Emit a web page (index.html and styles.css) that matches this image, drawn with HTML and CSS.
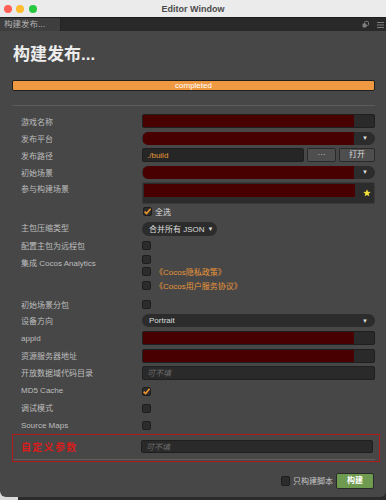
FILE: index.html
```html
<!DOCTYPE html>
<html lang="zh">
<head>
    <meta charset="UTF-8">
    <meta name="viewport" content="width=device-width, initial-scale=1.0">
    <title>Editor Window</title>
    <link rel="stylesheet" href="styles.css">
</head>
<body>
    <div class="window">
        <div class="titlebar">
            <div class="lights">
                <span class="light red"></span>
                <span class="light yellow"></span>
                <span class="light green"></span>
            </div>
            <div class="title">Editor Window</div>
            <div></div>
        </div>

        <div class="tabbar">
            <div class="tab">构建发布...</div>
            <div class="tab-rest">
                <svg width="7" height="7" viewBox="0 0 7 7">
                    <rect x="2.5" y="0.5" width="4" height="4" rx="1" fill="none" stroke="#7d7d7d"/>
                    <rect x="0.5" y="2.5" width="4" height="4" rx="1" fill="#7d7d7d"/>
                </svg>
                <svg width="7" height="6" viewBox="0 0 7 6">
                    <path d="M0 0.5H7M0 3H7M0 5.5H7" stroke="#7d7d7d" stroke-width="1"/>
                </svg>
            </div>
        </div>

        <div class="panel">
            <h1>构建发布...</h1>
            <div class="progress">completed</div>
            <div class="divider"></div>

            <div class="form">
                <div class="row">
                    <span class="label">游戏名称</span>
                    <div class="input"><span class="redact"></span></div>
                </div>
                <div class="row">
                    <span class="label">发布平台</span>
                    <div class="select"><span class="redact"></span><span class="arrow">▼</span></div>
                </div>
                <div class="row">
                    <span class="label">发布路径</span>
                    <div class="path">
                        <div class="input path-input">./build</div>
                        <div class="btn dots">···</div>
                        <div class="btn open">打开</div>
                    </div>
                </div>
                <div class="row">
                    <span class="label">初始场景</span>
                    <div class="select"><span class="redact"></span><span class="arrow">▼</span></div>
                </div>
                <div class="row scenes-row">
                    <span class="label top">参与构建场景</span>
                    <div class="scenes">
                        <span class="redact"></span>
                        <svg class="star" width="8" height="8" viewBox="0 0 10 10">
                            <path d="M5 0.4L6.3 3.4L9.6 3.7L7.1 5.9L7.9 9.2L5 7.5L2.1 9.2L2.9 5.9L0.4 3.7L3.7 3.4Z" fill="#f3df3c"/>
                        </svg>
                    </div>
                </div>
                <div class="row selall-row">
                    <span></span>
                    <div class="selall">
                        <span class="check on">
                            <svg width="9" height="9" viewBox="0 0 9 9"><path d="M1.6 4.6L3.6 6.6L7.6 1.8" fill="none" stroke="#f0962e" stroke-width="1.6"/></svg>
                        </span>
                        <span>全选</span>
                    </div>
                </div>
                <div class="row pill-row">
                    <span class="label">主包压缩类型</span>
                    <div><span class="pill">合并所有 JSON <span class="arrow">▼</span></span></div>
                </div>
                <div class="row short">
                    <span class="label">配置主包为远程包</span>
                    <div><span class="check"></span></div>
                </div>
                <div class="row short">
                    <span class="label low">集成 Cocos Analytics</span>
                    <div><span class="check"></span></div>
                </div>
                <div class="row short">
                    <span></span>
                    <div class="link-line"><span class="check"></span><span class="link">《Cocos隐私政策》</span></div>
                </div>
                <div class="row short">
                    <span></span>
                    <div class="link-line"><span class="check"></span><span class="link">《Cocos用户服务协议》</span></div>
                </div>

                <div class="group">
                    <div class="row tall">
                        <span class="label">初始场景分包</span>
                        <div><span class="check"></span></div>
                    </div>
                    <div class="row tall">
                        <span class="label">设备方向</span>
                        <div class="select"><span class="value">Portrait</span><span class="arrow">▼</span></div>
                    </div>
                    <div class="row tall">
                        <span class="label">appid</span>
                        <div class="input"><span class="redact"></span></div>
                    </div>
                    <div class="row tall">
                        <span class="label">资源服务器地址</span>
                        <div class="input"><span class="redact"></span></div>
                    </div>
                    <div class="row tall">
                        <span class="label">开放数据域代码目录</span>
                        <div class="input"><span class="placeholder">可不填</span></div>
                    </div>
                    <div class="row tall">
                        <span class="label">MD5 Cache</span>
                        <div>
                            <span class="check on">
                                <svg width="9" height="9" viewBox="0 0 9 9"><path d="M1.6 4.6L3.6 6.6L7.6 1.8" fill="none" stroke="#f0962e" stroke-width="1.6"/></svg>
                            </span>
                        </div>
                    </div>
                    <div class="row tall">
                        <span class="label">调试模式</span>
                        <div><span class="check"></span></div>
                    </div>
                    <div class="row tall">
                        <span class="label">Source Maps</span>
                        <div><span class="check"></span></div>
                    </div>
                </div>
            </div>

            <!-- 自定义参数 -->
            <div class="custom">
                <div class="row custom-row">
                    <span class="custom-label">自定义参数</span>
                    <div class="input"><span class="placeholder">可不填</span></div>
                </div>
                <div class="custom-divider"></div>
            </div>

            <div class="footer">
                <span class="check big"></span>
                <span class="footer-text">只构建脚本</span>
                <div class="build">构建</div>
            </div>
        </div>
    </div>
    <div class="dock"></div>
</body>
</html>
```

FILE: styles.css
```css
* {
    box-sizing: border-box;
}

body {
    margin: 0;
    width: 386px;
    height: 500px;
    overflow: hidden;
    background: linear-gradient(to right, #dadada 0, #dadada 18px, #2b2b2b 18px);
    font-family: "Liberation Sans", "Noto Sans CJK SC", sans-serif;
}

.window {
    height: 497px;
    display: flex;
    flex-direction: column;
}

/* 标题栏 */
.titlebar {
    height: 17px;
    background-color: #ebebeb;
    display: grid;
    grid-template-columns: 1fr auto 1fr;
    align-items: center;
}

.lights {
    display: flex;
    gap: 4.5px;
    padding-left: 3.5px;
}

.light {
    width: 8px;
    height: 8px;
    border-radius: 50%;
}

.light.red { background-color: #fe5f57; }
.light.yellow { background-color: #febc2e; }
.light.green { background-color: #28c840; }

.title {
    font-size: 9px;
    font-weight: bold;
    color: #4a4a4a;
}

/* 标签栏 */
.tabbar {
    height: 14px;
    display: flex;
    background-color: #2b2b2b;
    border-top: 1px solid #1f1f1f;
}

.tab {
    width: 61px;
    background-color: #3e3e3e;
    border-right: 1px solid #232323;
    color: #b2b2b2;
    font-size: 8.5px;
    line-height: 13px;
    padding-left: 4px;
}

.tab-rest {
    flex: 1;
    display: flex;
    justify-content: flex-end;
    align-items: center;
    gap: 8px;
    padding-right: 2px;
    background-color: #292929;
}

/* 主面板 */
.panel {
    flex: 1;
    background-color: #474747;
    padding: 0 11px 0 12px;
    border-radius: 0 0 6px 6px;
}

h1 {
    margin: 14px 0 0 1px;
    font-size: 17px;
    line-height: 20px;
    font-weight: bold;
    color: #ececec;
}

.progress {
    margin-top: 15px;
    height: 11px;
    border: 1px solid #1e1e1e;
    border-radius: 2px;
    background-color: #ef9a43;
    color: #fff;
    font-size: 8px;
    line-height: 9px;
    text-align: center;
}

.divider {
    margin-top: 14px;
    height: 1px;
    background-color: #5c5c5c;
}

.form {
    margin-top: 6.5px;
    padding-left: 9px;
}

.row {
    display: grid;
    grid-template-columns: 121px 1fr;
    align-items: center;
    height: 17px;
}

.row.short { height: 14px; }
.row.tall { height: 17.3px; }
.scenes-row { height: 24.5px; align-items: start; }
.selall-row { height: 13px; }
.pill-row { height: 18px; }

.group {
    margin-top: 3px;
}

.label {
    font-size: 8px;
    color: #bdbdbd;
}

.label.top {
    line-height: 17px;
}

.label.low {
    padding-top: 6px;
}

.input {
    height: 14px;
    display: flex;
    align-items: center;
    background-color: #2a2a2a;
    border: 1px solid #1f1f1f;
    border-radius: 2px;
    overflow: hidden;
}

.redact {
    align-self: stretch;
    width: 211px;
    background-color: #490000;
}

.select {
    height: 13px;
    display: flex;
    align-items: center;
    justify-content: space-between;
    background-color: #2c2c2c;
    border-radius: 7px;
    overflow: hidden;
}

.select .redact {
    margin-left: 1px;
}

.arrow {
    font-size: 6px;
    color: #dedede;
    padding-right: 7px;
}

.value {
    font-size: 8px;
    color: #dedede;
    padding-left: 7px;
}

.path {
    display: flex;
    gap: 3px;
}

.path-input {
    width: 162px;
    padding-left: 4px;
    font-size: 8px;
    color: #e8963a;
    background-color: #262626;
}

.btn {
    height: 14px;
    background-color: #4e4e4e;
    border: 1px solid #2a2a2a;
    border-radius: 2px;
    color: #dcdcdc;
    font-size: 8px;
    line-height: 12px;
    text-align: center;
}

.btn.dots { width: 29px; }
.btn.open { flex: 1; }

.scenes {
    margin-top: 1.5px;
    height: 22px;
    display: flex;
    justify-content: space-between;
    align-items: flex-start;
    background-color: #2c2c2c;
    border: 1px solid #3a3a3a;
    border-radius: 2px;
}

.scenes .redact {
    height: 13px;
    margin: 1px 0 0 1px;
}

.star {
    margin: 6px 3px 0 0;
}

.selall {
    display: flex;
    align-items: center;
    gap: 3px;
    padding-left: 1px;
    font-size: 8px;
    color: #dedede;
}

.check {
    display: inline-block;
    width: 9px;
    height: 9px;
    background-color: #2c2c2c;
    border: 1px solid #1d1d1d;
    border-radius: 2px;
    vertical-align: middle;
    position: relative;
}

.check svg {
    position: absolute;
    left: -1px;
    top: -1px;
}

.check.big {
    width: 9.5px;
    height: 9.5px;
}

.pill {
    display: inline-flex;
    align-items: center;
    gap: 3px;
    width: 75px;
    height: 14px;
    padding-left: 7px;
    border-radius: 7px;
    background-color: #2c2c2c;
    font-size: 8px;
    color: #dedede;
}

.pill .arrow {
    padding-right: 0;
}

.link-line {
    display: flex;
    align-items: center;
    gap: 4px;
}

.link {
    font-size: 8px;
    color: #e8963a;
}

.placeholder {
    padding-left: 4px;
    font-size: 8px;
    font-style: italic;
    color: #6b6b6b;
}

/* 自定义参数 */
.custom {
    margin: 0.5px -5px 0 0;
    border: 1px solid #b11d1d;
    padding: 3px 6px 1px 8px;
}

.custom-row {
    grid-template-columns: 120px 1fr;
}

.custom-row .input {
    height: 13px;
}

.custom-label {
    font-size: 10px;
    font-weight: bold;
    letter-spacing: 1.3px;
    color: #d91c1c;
}

.custom-divider {
    margin: 4px -2px 0 -8px;
    height: 1px;
    background-color: #5f5f5f;
}

.footer {
    margin-top: 11px;
    display: flex;
    justify-content: flex-end;
    align-items: center;
    gap: 3px;
    padding-right: 1px;
}

.footer-text {
    font-size: 8px;
    color: #c8c8c8;
}

.build {
    width: 38px;
    height: 16px;
    background-color: #6f9b50;
    border: 1px solid #2a2a2a;
    border-radius: 2px;
    color: #fff;
    font-size: 8px;
    font-weight: bold;
    line-height: 14px;
    text-align: center;
}

.dock {
    height: 3px;
}
```
